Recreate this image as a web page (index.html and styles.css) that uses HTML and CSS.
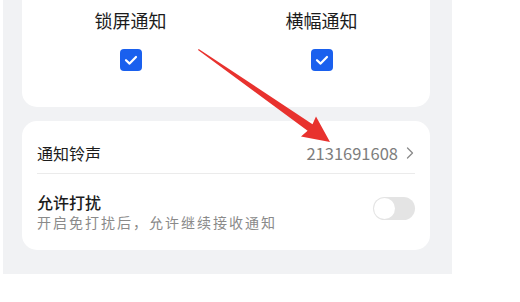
FILE: index.html
```html
<!DOCTYPE html>
<html lang="zh">
<head>
<meta charset="utf-8">
<link rel="stylesheet" href="styles.css">
</head>
<body>
<div class="panel">
  <div class="card card-top">
    <div class="col">
      <div class="col-title">锁屏通知</div>
      <div class="check"><svg viewBox="0 0 22 22" width="22" height="22"><path d="M6 11.2 L9.6 14.6 L16 8" fill="none" stroke="#fff" stroke-width="2.2" stroke-linecap="round" stroke-linejoin="round"/></svg></div>
    </div>
    <div class="col">
      <div class="col-title">横幅通知</div>
      <div class="check"><svg viewBox="0 0 22 22" width="22" height="22"><path d="M6 11.2 L9.6 14.6 L16 8" fill="none" stroke="#fff" stroke-width="2.2" stroke-linecap="round" stroke-linejoin="round"/></svg></div>
    </div>
  </div>
  <div class="card card-list">
    <div class="row row-ring">
      <div class="row-title">通知铃声</div>
      <div class="row-value">2131691608<svg class="chev" viewBox="0 0 8 12" width="8" height="12"><path d="M1.5 1 L6.5 6 L1.5 11" fill="none" stroke="#8a8a8a" stroke-width="1.3" stroke-linecap="round" stroke-linejoin="round"/></svg></div>
    </div>
    <div class="divider"></div>
    <div class="row row-dnd">
      <div class="row-text">
        <div class="row-title strong">允许打扰</div>
        <div class="row-sub">开启免打扰后，允许继续接收通知</div>
      </div>
      <div class="toggle"><div class="knob"></div></div>
    </div>
  </div>
</div>
<svg class="arrow" width="520" height="302" viewBox="0 0 520 302">
  <polygon points="198,50 198.7,49 312.5,124.2 316,116.5 330,142 301,136.5 307.6,130.8" fill="#e8322e"/>
</svg>
</body>
</html>
```

FILE: styles.css
```css
html, body {
  margin: 0;
  padding: 0;
  background: #ffffff;
  width: 520px;
  height: 302px;
  overflow: hidden;
  font-family: "Noto Sans CJK SC", "Noto Sans", sans-serif;
}

.panel {
  margin-left: 3px;
  width: 449px;
  height: 274px;
  background: #f1f2f4;
  padding: 0 22px 0 19px;
  box-sizing: border-box;
  overflow: hidden;
}

.card {
  background: #ffffff;
  border-radius: 15px;
}

.card-top {
  margin-top: -14px;
  padding: 22px 13px 36px;
  display: flex;
}

.col {
  flex: 1;
  display: flex;
  flex-direction: column;
  align-items: center;
  gap: 17px;
}

.col-title {
  font-size: 18px;
  line-height: 24px;
  color: #1c1c1c;
}

.check {
  width: 22px;
  height: 22px;
  border-radius: 4px;
  background: #1a60ee;
  display: flex;
}

.card-list {
  margin-top: 14px;
  padding: 0 15px;
  height: 129px;
  box-sizing: border-box;
}

.row {
  display: flex;
  align-items: center;
  justify-content: space-between;
}

.row-ring {
  padding: 20px 0 8px;
}

.row-title {
  font-size: 16px;
  line-height: 24px;
  color: #1c1c1c;
}

.row-title.strong {
  line-height: 22px;
  font-weight: 500;
}

.row-value {
  display: flex;
  align-items: center;
  gap: 8px;
  font-size: 16.5px;
  line-height: 24px;
  color: #7d7d7d;
  margin-right: 1px;
}

.chev {
  display: block;
}

.divider {
  height: 1px;
  background: #ebebeb;
}

.row-dnd {
  padding: 17px 0 0;
}

.row-sub {
  font-size: 14px;
  line-height: 18px;
  letter-spacing: 2px;
  color: #8a8a8a;
}

.toggle {
  width: 42px;
  height: 23px;
  border-radius: 12px;
  background: #e4e4e4;
  padding: 1px;
  box-sizing: border-box;
  margin-top: -6px;
}

.knob {
  width: 21px;
  height: 21px;
  border-radius: 50%;
  background: #ffffff;
}

.arrow {
  position: absolute;
  left: 0;
  top: 0;
  pointer-events: none;
}
```
